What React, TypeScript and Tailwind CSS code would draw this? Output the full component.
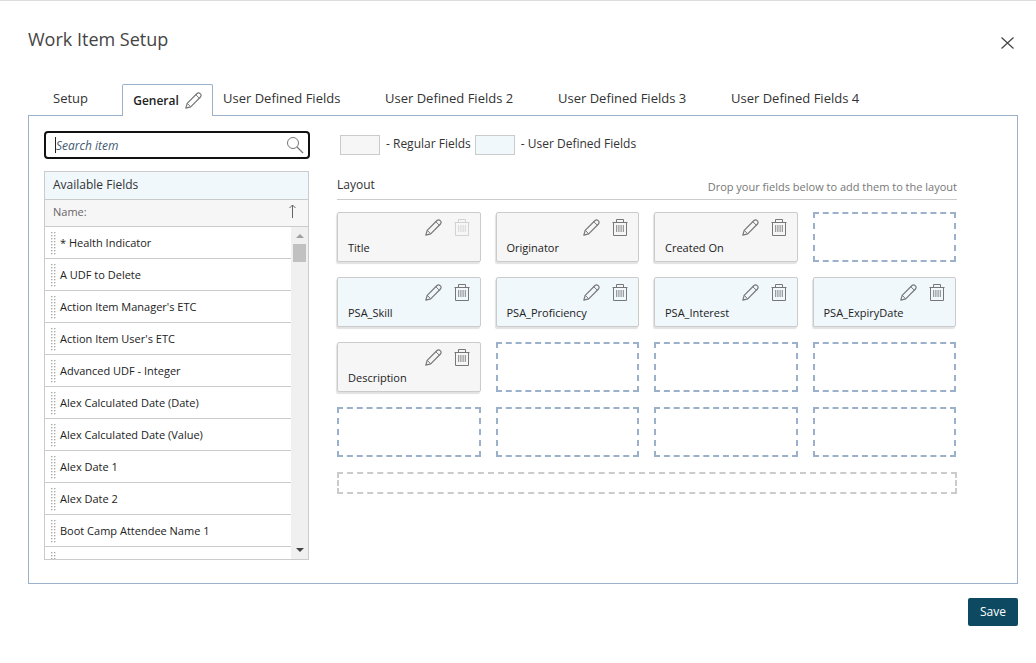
/**
 * Work Item Setup dialog
 *
 * - Tab strip with an editable active tab
 * - Searchable list of available fields
 * - Layout grid with placed fields and empty drop slots
 */

import { useState } from 'react';

type FieldKind = 'regular' | 'udf';

interface LayoutField {
  name: string;
  kind: FieldKind;
  locked?: boolean;
}

const AVAILABLE_FIELDS = [
  '* Health Indicator',
  'A UDF to Delete',
  "Action Item Manager's ETC",
  "Action Item User's ETC",
  'Advanced UDF - Integer',
  'Alex Calculated Date (Date)',
  'Alex Calculated Date (Value)',
  'Alex Date 1',
  'Alex Date 2',
  'Boot Camp Attendee Name 1',
];

// null is an empty drop slot
const LAYOUT: (LayoutField | null)[] = [
  { name: 'Title', kind: 'regular', locked: true },
  { name: 'Originator', kind: 'regular' },
  { name: 'Created On', kind: 'regular' },
  null,
  { name: 'PSA_Skill', kind: 'udf' },
  { name: 'PSA_Proficiency', kind: 'udf' },
  { name: 'PSA_Interest', kind: 'udf' },
  { name: 'PSA_ExpiryDate', kind: 'udf' },
  { name: 'Description', kind: 'regular' },
  null,
  null,
  null,
  null,
  null,
  null,
  null,
];

function PencilIcon() {
  return (
    <svg width="17" height="17" viewBox="0 0 17 17" fill="none" stroke="currentColor" strokeLinejoin="round" aria-hidden="true">
      <path d="M.8 16.2 2.2 11.3 12 1.5Q13.6.2 15.2 1.6T15.5 5L5.7 14.8Z" strokeWidth="1.2" />
      <path d="M2.2 11.3 5.7 14.8M10.8 2.7 14.3 6.2" />
    </svg>
  );
}

function TrashIcon() {
  return (
    <svg width="16" height="17" viewBox="0 0 16 17" fill="none" stroke="currentColor" aria-hidden="true">
      <path d="M.5 3.5H15.5M4.5 3V.5H11.5V3M1.5 3.5V16.5H14.5V3.5" />
      <path d="M4.7 6V13M6.9 6V13M9.1 6V13M11.3 6V13" strokeWidth=".9" />
    </svg>
  );
}

function GripIcon() {
  return (
    <svg width="5" height="23" viewBox="0 0 5 23" fill="#a8a8a8" aria-hidden="true">
      {[0, 3, 6, 9, 12, 15, 18, 21].map((y) => (
        <g key={y}>
          <rect x="0" y={y} width="1.4" height="1.3" />
          <rect x="3" y={y} width="1.4" height="1.3" />
        </g>
      ))}
    </svg>
  );
}

function FieldCard({ field }: { field: LayoutField }) {
  return (
    <div
      className={`flex h-[50px] flex-col rounded-xs border border-[#cbcbcb] shadow-[-1px_2px_1px_#e2e2e2] ${
        field.kind === 'udf' ? 'bg-[#f0f8fc]' : 'bg-[#f6f6f6]'
      }`}
    >
      <div className="flex justify-end gap-3 pt-1.5 pr-2.5 text-[#777]">
        <button type="button" aria-label={`Edit ${field.name}`}>
          <PencilIcon />
        </button>
        <button
          type="button"
          aria-label={`Remove ${field.name}`}
          disabled={field.locked}
          className="disabled:text-[#d2d2d2]"
        >
          <TrashIcon />
        </button>
      </div>
      <div className="mt-1 pl-2.5 text-[11px] leading-4 text-[#222]">{field.name}</div>
    </div>
  );
}

const TABS = [
  { label: 'Setup', className: 'w-[94px] pl-[25px]' },
  { label: 'General', className: 'w-[91px]' },
  { label: 'User Defined Fields', className: 'w-[162px] pl-2.5' },
  { label: 'User Defined Fields 2', className: 'w-[173px] pl-2.5' },
  { label: 'User Defined Fields 3', className: 'w-[173px] pl-2.5' },
  { label: 'User Defined Fields 4', className: 'w-[173px] pl-2.5' },
];

export default function App() {
  const [query, setQuery] = useState('');
  const fields = AVAILABLE_FIELDS.filter((name) => name.toLowerCase().includes(query.toLowerCase()));

  return (
    <div className="min-h-screen border-t border-[#dcdcdc] bg-white px-[28px] pr-[18px] font-['Open_Sans',sans-serif] text-[#333]">
      <header className="flex items-start justify-between pt-6">
        <h1 className="pb-0.5 text-[18px] leading-7 text-[#444]">Work Item Setup</h1>
        <button type="button" aria-label="Close" className="mt-3 mr-1 text-[#444]">
          <svg width="13" height="12" viewBox="0 0 13 12" fill="none" stroke="currentColor" strokeWidth="1.2" aria-hidden="true">
            <path d="M.5.5 12.5 11.5M12.5.5.5 11.5" />
          </svg>
        </button>
      </header>

      {/* Tabs */}
      <div role="tablist" className="mt-[29px] flex h-8 text-[12px] text-[#333]">
        {TABS.map((tab) =>
          tab.label === 'General' ? (
            <button
              key={tab.label}
              type="button"
              role="tab"
              aria-selected="true"
              className={`z-10 flex h-8 shrink-0 items-center justify-center gap-1.5 rounded-t-xs border border-b-0 border-[#9bb0cb] bg-white font-semibold text-[#222] ${tab.className}`}
            >
              {tab.label}
              <span className="text-[#777]">
                <PencilIcon />
              </span>
            </button>
          ) : (
            <button
              key={tab.label}
              type="button"
              role="tab"
              aria-selected="false"
              className={`h-[29px] shrink-0 text-left whitespace-nowrap text-[13px] ${tab.className}`}
            >
              {tab.label}
            </button>
          )
        )}
      </div>

      <main className="-mt-px flex gap-[27px] border border-[#9bb0cb] pt-[15px] pr-[60px] pb-[23px] pl-[15px]">
        {/* Available fields */}
        <section className="w-[266px] shrink-0">
          <div className="relative">
            <input
              type="text"
              aria-label="Search item"
              placeholder="Search item"
              value={query}
              onChange={(e) => setQuery(e.target.value)}
              className="block h-7 w-full rounded-sm border-2 border-[#111] pr-8 pl-2.5 text-[12px] outline-none placeholder:text-[#3f5a72] placeholder:italic"
            />
            <span className="absolute top-1.5 left-[11px] h-4 w-px bg-[#222]" />
            <svg
              className="absolute top-[5px] right-1.5"
              width="18"
              height="18"
              viewBox="0 0 18 18"
              fill="none"
              stroke="#777"
              aria-hidden="true"
            >
              <circle cx="7" cy="7" r="5.5" />
              <path d="M11 11 17 17" strokeWidth="1.3" />
            </svg>
          </div>

          <div className="mt-3 mr-px border border-[#cbcbcb]">
            <h2 className="h-7 border-b border-[#cbcbcb] bg-[#f0f8fc] pl-2 text-[12px] leading-[26px]">Available Fields</h2>
            <div className="flex h-[27px] items-start justify-between border-b border-[#cbcbcb] bg-[#f6f6f6] pr-3 pl-2 text-[11px] leading-6 text-[#666]">
              Name:
              <button type="button" aria-label="Sort by name" className="pt-1">
                <svg width="8" height="14" viewBox="0 0 8 14" fill="none" stroke="#666" aria-hidden="true">
                  <path d="M4.5 14V1M1.5 4 4.5 1 7.5 4" />
                </svg>
              </button>
            </div>
            <div className="flex h-[332px]">
              <ul className="min-w-0 flex-1 overflow-hidden">
                {fields.map((name) => (
                  <li
                    key={name}
                    className="flex h-8 items-center gap-1 border-b border-[#cbcbcb] pt-px pl-1.5 text-[11px] text-[#222]"
                  >
                    <GripIcon />
                    {name}
                  </li>
                ))}
                <li className="h-8 pt-[5px] pl-1.5">
                  <GripIcon />
                </li>
              </ul>
              {/* Scrollbar */}
              <div className="flex w-[17px] flex-col items-center justify-between bg-[#f0f0f0]" aria-hidden="true">
                <div className="flex flex-col items-center">
                  <div className="flex h-[17px] items-center">
                    <svg width="8" height="4" viewBox="0 0 8 4" fill="#a0a0a0">
                      <path d="M0 4 4 0 8 4Z" />
                    </svg>
                  </div>
                  <div className="h-[18px] w-[13px] bg-[#c1c1c1]" />
                </div>
                <div className="flex h-[18px] items-center">
                  <svg width="8" height="4" viewBox="0 0 8 4" fill="#444">
                    <path d="M0 0 4 4 8 0Z" />
                  </svg>
                </div>
              </div>
            </div>
          </div>
        </section>

        {/* Layout */}
        <section className="min-w-0 flex-1">
          <div className="flex pt-1 pl-[3px] text-[12px] leading-[18px]">
            <span className="h-5 w-10 border border-[#cbcbcb] bg-[#f6f6f6]" />
            <span className="ml-1.5">- Regular Fields</span>
            <span className="ml-1 h-5 w-10 border border-[#cbcbcb] bg-[#f0f8fc]" />
            <span className="ml-1.5">- User Defined Fields</span>
          </div>
          <div className="mt-[18px] flex h-[27px] justify-between border-b border-[#cbcbcb]">
            <h2 className="text-[12px] leading-6">Layout</h2>
            <p className="pt-1 text-[11px] leading-5 text-[#777]">Drop your fields below to add them to the layout</p>
          </div>
          <div className="mt-3 mr-px grid grid-cols-4 gap-[15px]">
            {LAYOUT.map((field, i) =>
              field ? (
                <FieldCard key={i} field={field} />
              ) : (
                <div key={i} className="h-[50px] border-2 border-dashed border-[#9bb0cb]" />
              )
            )}
          </div>
          <div className="mt-[15px] h-[22px] border-2 border-dashed border-[#cbcbcb]" />
        </section>
      </main>

      <footer className="flex justify-end pt-3.5">
        <button type="button" className="h-7 w-[50px] rounded-xs bg-[#0d4a61] text-[12px] font-medium text-white">
          Save
        </button>
      </footer>
    </div>
  );
}
